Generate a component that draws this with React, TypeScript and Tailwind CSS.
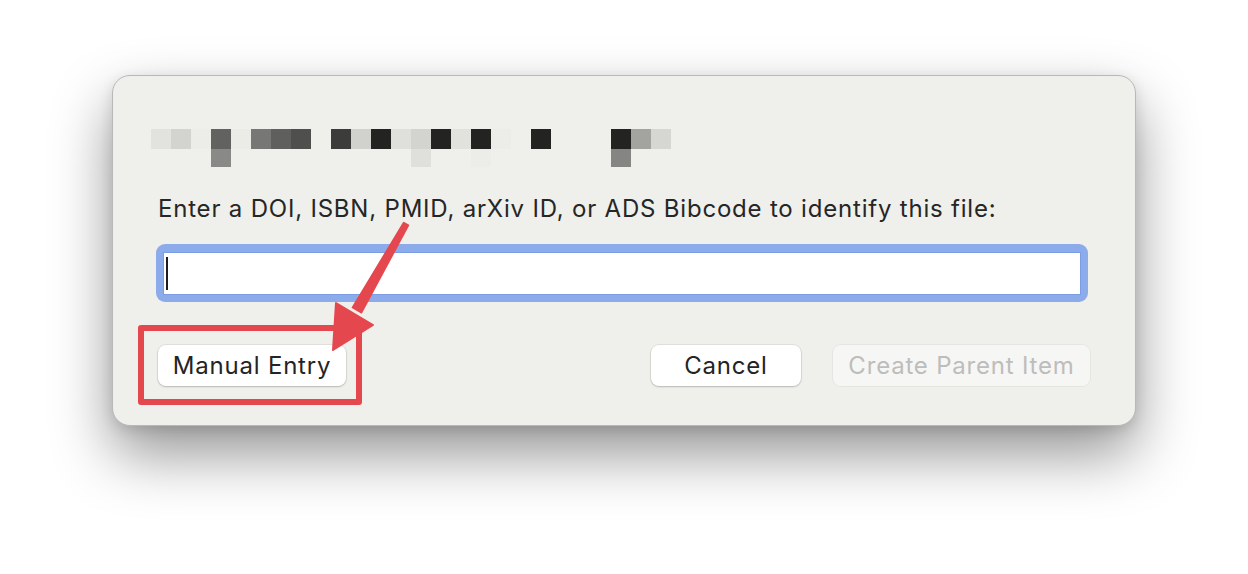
import React from 'react';

// pixelated (censored) title, 20px blocks
const topRow = [
  'bg-[#e2e2de]', 'bg-[#d3d4cf]', 'bg-[#ecece9]', 'bg-[#626260]', 'bg-[#ebebe8]', 'bg-[#777775]',
  'bg-[#5f5f5d]', 'bg-[#4f4f4d]', '', 'bg-[#3c3c3a]', 'bg-[#d1d2cd]', 'bg-[#232321]',
  'bg-[#dfe0dc]', 'bg-[#d3d4cf]', 'bg-[#232321]', 'bg-[#e1e1dd]', 'bg-[#232321]', 'bg-[#ecece9]',
  '', 'bg-[#232321]', '', '', '', 'bg-[#232321]', 'bg-[#a3a4a0]', 'bg-[#d6d7d2]',
];

const bottomRow: Record<number, string> = {
  3: 'bg-[#898987]',
  13: 'bg-[#dfdfdb]',
  16: 'bg-[#ecece8]',
  23: 'bg-[#858583]',
};

const PixelTitle = () => (
  <div className="-ml-[7px] flex flex-col">
    <div className="flex">
      {topRow.map((c, i) => (
        <div key={i} className={`h-[20px] w-[20px] ${c}`} />
      ))}
    </div>
    <div className="flex">
      {topRow.map((_, i) => (
        <div key={i} className={`h-[18px] w-[20px] ${bottomRow[i] || ''}`} />
      ))}
    </div>
  </div>
);

const Button = ({ children, disabled, width }: { children: React.ReactNode; disabled?: boolean; width: string }) => (
  <button
    type="button"
    disabled={disabled}
    className={`${width} flex h-[41px] items-center justify-center rounded-[8px] text-[24px] tracking-[0.8px] ${
      disabled
        ? 'bg-[#f6f6f4] text-[#bdbdbb] shadow-[0_0_0_1px_rgba(0,0,0,0.04)]'
        : 'bg-white text-[#242424] shadow-[0_1px_2px_rgba(0,0,0,0.18),0_0_0_1px_rgba(0,0,0,0.06)]'
    }`}
  >
    {children}
  </button>
);

export default function App() {
  return (
    <div
      className="relative h-[574px] w-[1248px] overflow-hidden bg-white pt-[75px]"
      style={{ fontFamily: 'Inter, "Noto Sans", sans-serif' }}
    >
      <div className="mx-auto flex w-[1024px] flex-col rounded-[18px] border border-[#b8b8b8] bg-[#efefeb] px-[45px] pb-[39px] pt-[53px] shadow-[0_28px_60px_rgba(0,0,0,0.42),0_4px_14px_rgba(0,0,0,0.12)]">
        <PixelTitle />

        <p className="mt-[27px] text-[24px] leading-[29px] tracking-[0.8px] text-[#262626]">
          Enter a DOI, ISBN, PMID, arXiv ID, or ADS Bibcode to identify this file:
        </p>

        <div className="-ml-[2px] mr-[2px] mt-[21px] rounded-[9px] bg-[#8cabea] p-[7px] pt-[8px]">
          <div className="flex h-[43px] items-center bg-white pl-[3px] shadow-[inset_0_0_0_1px_#7d9de3]">
            <span className="h-[33px] w-[2px] bg-[#1c1c1c]" />
          </div>
        </div>

        <div className="mt-[43px] flex items-center">
          <Button width="w-[188px]">Manual Entry</Button>
          <div className="ml-auto flex gap-[32px]">
            <Button width="w-[150px]">Cancel</Button>
            <Button width="w-[257px]" disabled>
              Create Parent Item
            </Button>
          </div>
        </div>
      </div>

      {/* annotation: red box + arrow */}
      <div className="absolute left-[138px] top-[325px] h-[80px] w-[224px] rounded-[3px] border-[6px] border-[#e5474e]" />
      <svg className="absolute left-0 top-0" width="1248" height="574" viewBox="0 0 1248 574">
        <polygon
          points="403.8,222.8 408.2,225.3 361.3,312.5 352.7,307.5"
          fill="#e5474e"
          stroke="#e5474e"
          strokeWidth="2"
          strokeLinejoin="round"
        />
        <polygon
          points="336,303 373,325 333,350"
          fill="#e5474e"
          stroke="#e5474e"
          strokeWidth="2"
          strokeLinejoin="round"
        />
      </svg>
    </div>
  );
}
